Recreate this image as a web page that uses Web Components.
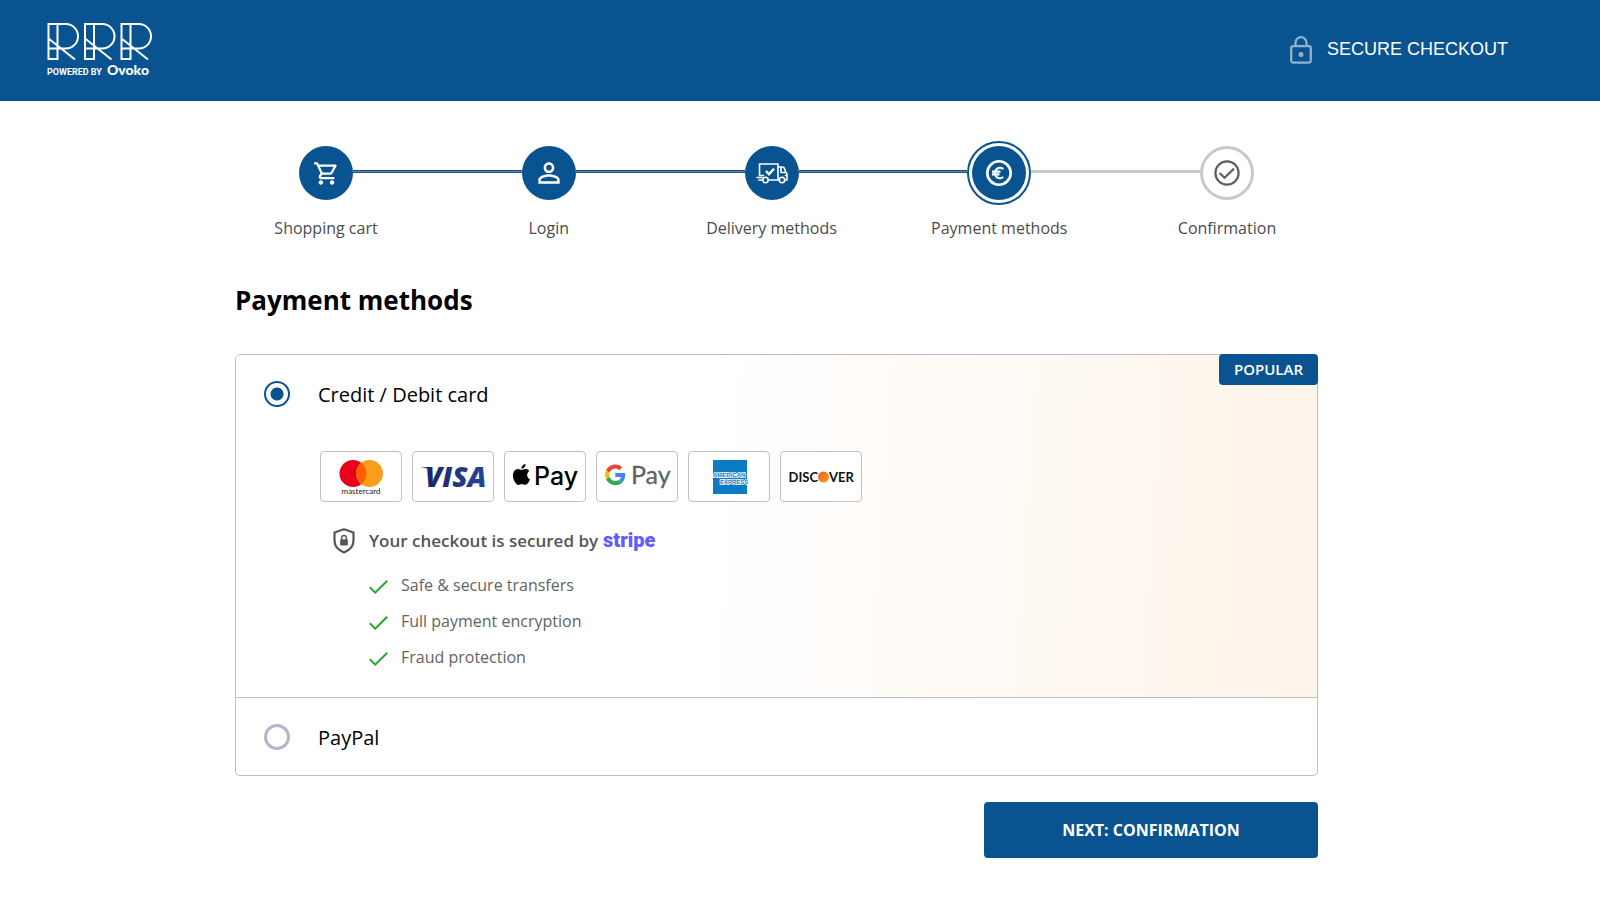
<!DOCTYPE html>
<html lang="en">
<head>
<meta charset="utf-8">
<meta name="viewport" content="width=device-width, initial-scale=1">
<title>Payment methods</title>
<style>
  body {
    margin: 0;
    background: #fff;
    color: #000;
    font-family: "Open Sans", "Noto Sans", sans-serif;
    --brand: #0a5391;
    --border: #bfbdce;
    --muted: #4b4b4b;
  }
</style>
</head>
<body>
<checkout-page>
  <site-header slot="header"></site-header>
  <checkout-stepper slot="steps">
    <checkout-step icon="cart" state="done">Shopping cart</checkout-step>
    <checkout-step icon="person" state="done">Login</checkout-step>
    <checkout-step icon="truck" state="done">Delivery methods</checkout-step>
    <checkout-step icon="euro" state="active">Payment methods</checkout-step>
    <checkout-step icon="check" state="todo">Confirmation</checkout-step>
  </checkout-stepper>
  <span slot="title">Payment methods</span>
  <payment-list>
    <payment-option label="Credit / Debit card" badge="POPULAR" checked>
      <card-brands></card-brands>
      <secure-note>
        <check-item>Safe &amp; secure transfers</check-item>
        <check-item>Full payment encryption</check-item>
        <check-item>Fraud protection</check-item>
      </secure-note>
    </payment-option>
    <payment-option label="PayPal"></payment-option>
  </payment-list>
  <next-button slot="actions">NEXT: CONFIRMATION</next-button>
</checkout-page>

<script>
const ICONS = {
  cart: `<svg width="27" height="27" viewBox="0 0 24 24" fill="currentColor"><path d="M15.55 13c.75 0 1.41-.41 1.75-1.03l3.58-6.49A.996.996 0 0 0 20.01 4H5.21l-.94-2H1v2h2l3.6 7.59-1.35 2.44C4.52 15.37 5.48 17 7 17h12v-2H7l1.1-2h7.45zM6.16 6h12.15l-2.76 5H8.53L6.16 6zM7 18c-1.1 0-1.99.9-1.99 2S5.9 22 7 22s2-.9 2-2-.9-2-2-2zm10 0c-1.1 0-1.99.9-1.99 2s.89 2 1.99 2 2-.9 2-2-.9-2-2-2z"/></svg>`,
  person: `<svg width="32" height="32" viewBox="0 0 24 24" fill="currentColor"><path d="M12 5.9a2.1 2.1 0 1 1 0 4.2 2.1 2.1 0 0 1 0-4.2m0 9c2.97 0 6.1 1.46 6.1 2.1v1.1H5.9V17c0-.64 3.13-2.1 6.1-2.1M12 4C9.79 4 8 5.79 8 8s1.79 4 4 4 4-1.79 4-4-1.79-4-4-4zm0 9c-2.67 0-8 1.34-8 4v3h16v-3c0-2.66-5.33-4-8-4z"/></svg>`,
  truck: `<svg width="32" height="22" viewBox="0 0 32 22" fill="none" stroke="currentColor" stroke-width="1.6" stroke-linejoin="round" stroke-linecap="round"><path d="M3.5 12.500V2h18.500v16H12.500M22 5h4.200c1.300 0 2.100.7 2.500 1.900l1 3.600c.9.300 1.300.9 1.300 1.900V18h-2M22.500 18h.8M25 5v5.500h4.700M29.500 13.500h1.500M3.500 13.500h4M1 15.500h5M3 18h3"/><circle cx="9.500" cy="18" r="2.700"/><circle cx="26" cy="18" r="2.700"/><path d="m10 9 3 3.200 5-5.400" stroke-width="2.400" stroke-linecap="butt" stroke-linejoin="miter"/></svg>`,
  euro: `<svg width="28" height="28" viewBox="0 0 28 28" fill="none" stroke="currentColor"><circle cx="14" cy="14" r="11.700" stroke-width="2.600"/><path d="M18.300 10a5.200 5.200 0 1 0 0 8M7 12.600h8.500M7 15.400h7.500" stroke-width="2.100"/></svg>`,
  check: `<svg width="28" height="28" viewBox="0 0 28 28" fill="none" stroke="currentColor" stroke-width="2.200"><circle cx="14" cy="14" r="11.600"/><path d="m6.500 14 5 4.800L21 9.600"/></svg>`
};

function defineElement(name, html) {
  const template = document.createElement('template');
  template.innerHTML = html;
  window.customElements.define(name, class extends HTMLElement {
    constructor() {
      super();
      this.attachShadow({ mode: 'open' });
      this.shadowRoot.appendChild(template.content.cloneNode(true));
    }
  });
}

defineElement('checkout-page', `
  <style>
    :host { display: block; }
    main {
      padding: 40px 47px 40px 0;
    }
    .content {
      max-width: 1083px;
      margin: 0 auto;
    }
    h1 {
      margin: 39px 0 33px;
      font-size: 26px;
      line-height: 42px;
      font-weight: 700;
    }
    .actions {
      display: flex;
      justify-content: flex-end;
      margin-top: 26px;
    }
  </style>
  <slot name="header"></slot>
  <main>
    <div class="content">
      <slot name="steps"></slot>
      <h1><slot name="title"></slot></h1>
      <slot></slot>
      <div class="actions"><slot name="actions"></slot></div>
    </div>
  </main>
`);

defineElement('site-header', `
  <style>
    :host { display: block; }
    header {
      display: flex;
      align-items: center;
      justify-content: space-between;
      padding: 22px 92px 20px 47px;
      background: var(--brand);
      color: #fff;
    }
    a {
      display: block;
      color: inherit;
      text-decoration: none;
    }
    svg { display: block; }
    .powered {
      display: flex;
      align-items: baseline;
      gap: 5px;
      font: 700 9px/18px "Liberation Sans Narrow", Roboto, sans-serif;
      white-space: nowrap;
    }
    .powered b {
      font: 900 14px/18px Lato, sans-serif;
    }
    .secure {
      display: flex;
      align-items: center;
      gap: 15px;
      padding-bottom: 4px;
      font: 18px/27px "Liberation Sans", Arial, sans-serif;
    }
    .secure svg { opacity: .55; }
  </style>
  <header>
    <a href="#" aria-label="RRR home">
      <svg width="106" height="39" viewBox="0 0 106 39" fill="none" stroke="currentColor" stroke-width="2">
        <g id="r">
          <path d="M1.500 2v35h9V2zM10.500 2h8.300a12 12 0 0 1 0 24.500H1.500M1.500 16.500 28 37.500"/>
        </g>
        <use href="#r" x="36.500"/>
        <use href="#r" x="73"/>
      </svg>
      <span class="powered">POWERED BY <b>Ovoko</b></span>
    </a>
    <div class="secure">
      <svg width="22" height="28" viewBox="0 0 22 28" fill="none" stroke="currentColor" stroke-width="2.300">
        <rect x="1.200" y="10.200" width="19.600" height="16.400" rx="2"/>
        <path d="M5.500 10V6.700a5.500 5.500 0 0 1 11 0V10"/>
        <circle cx="11" cy="18.400" r="2.500" fill="currentColor" stroke="none"/>
      </svg>
      <span>SECURE CHECKOUT</span>
    </div>
  </header>
`);

defineElement('checkout-stepper', `
  <style>
    :host { display: block; }
    nav {
      display: flex;
      padding: 0 64px;
    }
  </style>
  <nav aria-label="Checkout steps"><slot></slot></nav>
`);

class CheckoutStep extends HTMLElement {
  constructor() {
    super();
    this.attachShadow({ mode: 'open' });
  }

  connectedCallback() {
    this.shadowRoot.innerHTML = `
      <style>
        :host {
          display: flex;
          flex: 1 1 auto;
        }
        :host(:last-child) { flex: none; }
        .step {
          display: flex;
          flex-direction: column;
          align-items: center;
          width: 54px;
        }
        .holder {
          display: flex;
          align-items: center;
          height: 64px;
        }
        .circle {
          display: flex;
          align-items: center;
          justify-content: center;
          box-sizing: border-box;
          width: 54px;
          height: 54px;
          border-radius: 50%;
          background: var(--brand);
          color: #fff;
        }
        .label {
          margin-top: 11px;
          font-size: 16px;
          line-height: 24px;
          color: var(--muted);
          white-space: nowrap;
        }
        .line {
          flex: 1;
          height: 3px;
          margin-top: 29px;
          background: linear-gradient(#1d4587 1px, #6480b0 1px 2px, #1d5590 2px);
        }
        :host([state="active"]) .step { width: 64px; }
        :host([state="active"]) .circle {
          width: 64px;
          height: 64px;
          border: 2px solid var(--brand);
          padding: 3px;
          background-clip: content-box;
        }
        :host([state="active"]) .line { background: #c8c8c8; }
        :host([state="todo"]) .circle {
          border: 3px solid #c8c8c8;
          background: #fff;
          color: #5f5f5f;
        }
        :host(:last-child) .line { display: none; }
      </style>
      <div class="step">
        <div class="holder"><div class="circle">${ICONS[this.getAttribute('icon')]}</div></div>
        <div class="label"><slot></slot></div>
      </div>
      <div class="line"></div>
    `;
  }
}
window.customElements.define('checkout-step', CheckoutStep);

class PaymentList extends HTMLElement {
  constructor() {
    super();
    this.attachShadow({ mode: 'open' });
    // radios live in separate shadow roots, so the group is kept in sync here
    this.selectHandler = (event) => {
      this.querySelectorAll('payment-option').forEach(option => {
        option.toggleAttribute('checked', option === event.target);
        option.sync();
      });
    };
  }

  connectedCallback() {
    this.shadowRoot.innerHTML = `
      <style>
        :host {
          display: block;
          border: 1px solid var(--border);
          border-radius: 5px;
        }
      </style>
      <slot></slot>
    `;
    this.addEventListener('option-select', this.selectHandler);
  }

  disconnectedCallback() {
    this.removeEventListener('option-select', this.selectHandler);
  }
}
window.customElements.define('payment-list', PaymentList);

class PaymentOption extends HTMLElement {
  constructor() {
    super();
    this.attachShadow({ mode: 'open' });
  }

  connectedCallback() {
    let badge = this.getAttribute('badge');
    this.shadowRoot.innerHTML = `
      <style>
        :host {
          display: block;
          position: relative;
        }
        :host(:first-child) {
          border-radius: 4px 4px 0 0;
          background: linear-gradient(94deg, #fff 43%, #fff4ea 98%);
        }
        :host(:not(:first-child)) { border-top: 1px solid var(--border); }
        label {
          display: flex;
          align-items: center;
          gap: 28px;
          padding: 23px 28px;
          font-size: 20px;
          line-height: 29px;
          cursor: pointer;
        }
        label span { padding-top: 2px; }
        input {
          appearance: none;
          box-sizing: border-box;
          flex: none;
          width: 26px;
          height: 26px;
          margin: 0;
          border: 3px solid #b6b4c6;
          border-radius: 50%;
          background: #fff;
        }
        input:checked {
          border: 2px solid var(--brand);
          background: radial-gradient(circle, var(--brand) 6px, #fff 7px);
        }
        .badge {
          position: absolute;
          top: -1px;
          right: -1px;
          padding: 0 15px;
          border-radius: 4px;
          background: var(--brand);
          color: #fff;
          font-size: 15px;
          line-height: 31px;
          font-weight: 600;
        }
      </style>
      <label>
        <input type="radio" name="payment">
        <span>${this.getAttribute('label')}</span>
      </label>
      ${badge ? `<span class="badge">${badge}</span>` : ''}
      <slot></slot>
    `;
    this.sync();
    this.shadowRoot.querySelector('input').addEventListener('change', () => {
      this.dispatchEvent(new CustomEvent('option-select', { bubbles: true }));
    });
  }

  sync() {
    this.shadowRoot.querySelector('input').checked = this.hasAttribute('checked');
  }
}
window.customElements.define('payment-option', PaymentOption);

defineElement('card-brands', `
  <style>
    :host {
      display: flex;
      flex-wrap: wrap;
      gap: 10px;
      padding: 19px 28px 0 84px;
    }
    .brand {
      box-sizing: border-box;
      width: 82px;
      height: 51px;
      border: 1px solid var(--border);
      border-radius: 4px;
      background: #fff;
    }
    svg { display: block; }
  </style>
  <div class="brand">
    <svg width="80" height="49" viewBox="0 0 80 49">
      <circle cx="32" cy="21.500" r="13.500" fill="#eb001b"/>
      <circle cx="48.500" cy="21.500" r="13.500" fill="#f79e1b"/>
      <path d="M40.250 10.800a13.500 13.500 0 0 1 0 21.400 13.500 13.500 0 0 1 0-21.400z" fill="#ff5f00"/>
      <text x="40" y="42" text-anchor="middle" font-family="Lato" font-size="8" fill="#1c1c1c">mastercard</text>
    </svg>
  </div>
  <div class="brand">
    <svg width="80" height="49" viewBox="0 0 80 49">
      <defs>
        <linearGradient id="visa" x1="0" x2="1"><stop offset="0" stop-color="#1e2360"/><stop offset="1" stop-color="#21489b"/></linearGradient>
      </defs>
      <path d="M8.500 15h9.500l1 4c-2-1.800-5.500-3-10.500-3.700z" fill="#1e2360"/>
      <text x="12" y="35" font-family="Open Sans" font-size="28" font-style="italic" font-weight="800" fill="url(#visa)">VISA</text>
    </svg>
  </div>
  <div class="brand">
    <svg width="80" height="49" viewBox="0 0 80 49">
      <path transform="translate(6 12) scale(.87)" d="M12.152 6.896c-.948 0-2.415-1.078-3.960-1.040-2.040.027-3.910 1.183-4.961 3.014-2.117 3.675-.546 9.103 1.519 12.090 1.013 1.454 2.208 3.090 3.792 3.039 1.520-.065 2.090-.987 3.935-.987 1.831 0 2.350.987 3.960.948 1.637-.026 2.676-1.480 3.676-2.948 1.156-1.688 1.636-3.325 1.662-3.415-.039-.013-3.182-1.221-3.220-4.857-.026-3.040 2.480-4.494 2.597-4.559-1.429-2.090-3.623-2.324-4.390-2.376-2-.156-3.675 1.090-4.610 1.090zM15.530 3.830c.843-1.012 1.400-2.427 1.245-3.830-1.207.052-2.662.805-3.532 1.818-.780.896-1.454 2.338-1.273 3.714 1.338.104 2.715-.688 3.559-1.701"/>
      <text x="29" y="33" font-family="Inter" font-size="25" font-weight="500">Pay</text>
    </svg>
  </div>
  <div class="brand">
    <svg width="80" height="49" viewBox="0 0 80 49">
      <g transform="translate(8 12.500) scale(.43)">
        <path fill="#EA4335" d="M24 9.500c3.540 0 6.710 1.220 9.210 3.600l6.850-6.850C35.900 2.380 30.470 0 24 0 14.620 0 6.510 5.380 2.560 13.220l7.980 6.190C12.430 13.720 17.740 9.500 24 9.500z"/>
        <path fill="#4285F4" d="M46.980 24.550c0-1.570-.150-3.090-.380-4.550H24v9.020h12.940c-.580 2.960-2.260 5.480-4.780 7.180l7.730 6c4.510-4.180 7.090-10.360 7.090-17.650z"/>
        <path fill="#FBBC05" d="M10.530 28.590c-.480-1.450-.760-2.990-.760-4.590s.270-3.140.760-4.590l-7.980-6.190C.920 16.460 0 20.120 0 24c0 3.880.920 7.540 2.560 10.780l7.970-6.190z"/>
        <path fill="#34A853" d="M24 48c6.480 0 11.930-2.130 15.890-5.810l-7.730-6c-2.150 1.450-4.920 2.300-8.160 2.300-6.260 0-11.570-4.220-13.470-9.910l-7.980 6.190C6.510 42.620 14.620 48 24 48z"/>
      </g>
      <text x="34" y="32" font-family="Lato" font-size="25" fill="#5f6368" stroke="#5f6368" stroke-width=".3">Pay</text>
    </svg>
  </div>
  <div class="brand">
    <svg width="80" height="49" viewBox="0 0 80 49">
      <path d="M24 8h34v34H24z" fill="#0a7bc4"/>
      <g font-family="Liberation Sans" font-size="6" font-weight="700" fill="#0a7bc4" stroke="#fff" stroke-width="1.400" paint-order="stroke">
        <text x="24" y="25">AMERICAN</text>
        <text x="31" y="32">EXPRESS</text>
      </g>
    </svg>
  </div>
  <div class="brand">
    <svg width="80" height="49" viewBox="0 0 80 49">
      <defs>
        <linearGradient id="disc" x1="0" y1="0" x2="1" y2="1"><stop offset="0" stop-color="#e55c20"/><stop offset="1" stop-color="#f9a020"/></linearGradient>
      </defs>
      <g font-family="Lato" font-size="13" font-weight="700" fill="#111">
        <text x="37" y="30" text-anchor="end">DISC</text>
        <text x="48" y="30">VER</text>
      </g>
      <circle cx="42.500" cy="25" r="5.500" fill="url(#disc)"/>
    </svg>
  </div>
`);

defineElement('secure-note', `
  <style>
    :host {
      display: block;
      padding: 25px 28px 22px 97px;
    }
    .title {
      display: flex;
      align-items: center;
      gap: 14px;
      margin-bottom: 13px;
      font-size: 17px;
      line-height: 27px;
      font-weight: 600;
      color: #555;
    }
    .stripe {
      margin-left: 5px;
      font-family: Roboto, sans-serif;
      font-size: 20px;
      font-weight: 900;
      color: #635bff;
    }
    ul {
      margin: 0;
      padding: 0 0 0 36px;
      list-style: none;
    }
  </style>
  <div class="title">
    <svg width="22" height="26" viewBox="0 0 22 26" fill="none" stroke="#575757" stroke-width="2.200">
      <path d="M11 1.300 1.500 4.500v8c0 5.500 3.500 9.500 9.500 12 6-2.500 9.500-6.500 9.500-12v-8z" stroke-linejoin="round"/>
      <path d="M7.200 11.300h7.600v6.200H7.200z" fill="#575757" stroke="none"/>
      <path d="M8.700 12V9.800a2.300 2.300 0 0 1 4.600 0V12" stroke-width="1.400"/>
    </svg>
    <span>Your checkout is secured by<span class="stripe">stripe</span></span>
  </div>
  <ul><slot></slot></ul>
`);

defineElement('check-item', `
  <style>
    :host { display: block; }
    li {
      display: flex;
      align-items: center;
      gap: 13px;
      font-size: 16px;
      line-height: 36px;
      color: #636363;
      list-style: none;
    }
    svg { margin-top: 4px; }
  </style>
  <li>
    <svg width="19" height="14" viewBox="0 0 19 14" fill="none" stroke="#28a52f" stroke-width="2"><path d="m.8 7.200 5.400 5.400L18.200.8"/></svg>
    <slot></slot>
  </li>
`);

defineElement('next-button', `
  <style>
    :host { display: block; }
    button {
      width: 334px;
      max-width: 100%;
      padding: 16px;
      border: 0;
      border-radius: 4px;
      background: var(--brand);
      color: #fff;
      font: 700 16px/24px "Open Sans", "Noto Sans", sans-serif;
      cursor: pointer;
    }
  </style>
  <button type="button"><slot></slot></button>
`);
</script>
</body>
</html>
